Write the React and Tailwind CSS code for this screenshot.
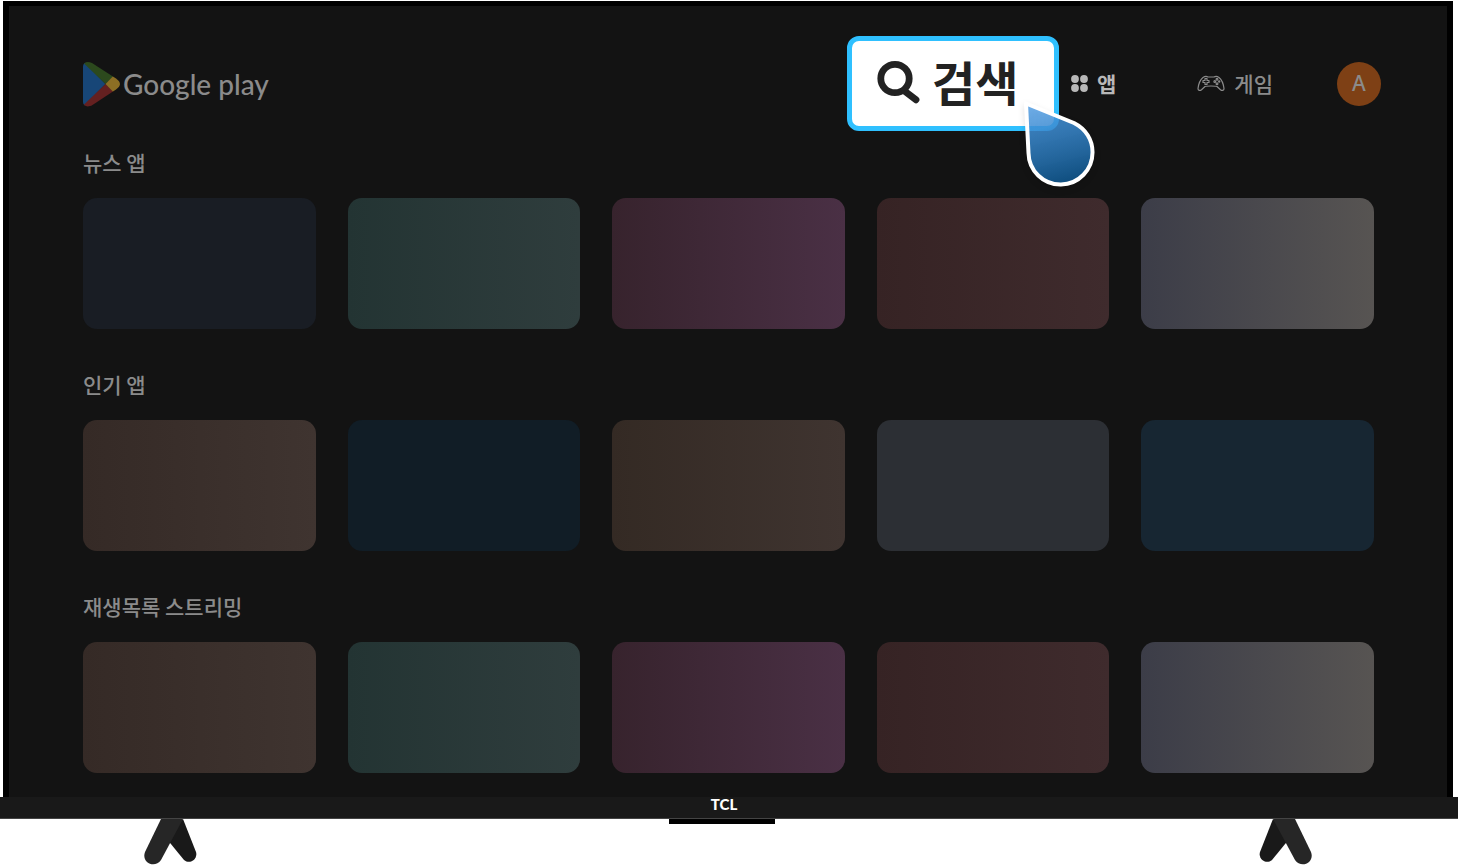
const tones = {
  navy: "bg-[#191d24]",
  teal: "bg-linear-to-r from-[#233433] to-[#2f3d3d]",
  plum: "bg-linear-to-r from-[#37232d] to-[#4a3045]",
  wine: "bg-linear-to-r from-[#362324] to-[#3f2b2d]",
  fog: "bg-linear-to-r from-[#3c3d48] to-[#575452]",
  umber: "bg-linear-to-r from-[#352a26] to-[#3f3430]",
  cocoa: "bg-linear-to-r from-[#342a24] to-[#3f3430]",
  ocean: "bg-[#111d26]",
  slate: "bg-[#2c2f34]",
  marine: "bg-[#172632]",
};

const sections = [
  { title: "뉴스 앱", tiles: ["navy", "teal", "plum", "wine", "fog"] },
  { title: "인기 앱", tiles: ["umber", "ocean", "cocoa", "slate", "marine"] },
  { title: "재생목록 스트리밍", tiles: ["umber", "teal", "plum", "wine", "fog"] },
];

const PlayLogo = () => (
  <svg viewBox="0 0 37 46" className="h-[46px] w-[37px]" aria-hidden="true">
    <defs>
      <clipPath id="play-shape">
        <path d="M0 5.500C0 1.500 4-.3 9 2L33 17.500c5.300 3.700 5.300 7.300 0 11L9.500 44C4.500 47 0 45 0 41Z" />
      </clipPath>
    </defs>
    <g clipPath="url(#play-shape)">
      <path d="M0 0v46l22.500-23Z" fill="#174677" />
      <path d="M0 0h37v9.500L22.500 23 0 1.500Z" fill="#2c491d" />
      <path d="M0 44.500 22.500 23 37 37v9H0Z" fill="#642020" />
      <path d="M22.500 23 30 15.300l7-1v18l-7-1.500Z" fill="#8c6f24" />
    </g>
  </svg>
);

const SearchIcon = () => (
  <svg viewBox="0 0 44 44" className="size-[44px]" fill="none" stroke="#222" aria-hidden="true">
    <circle cx="19" cy="18.500" r="14.200" strokeWidth="6.800" />
    <path d="m28.500 31 11.500 8.800" strokeWidth="6.800" strokeLinecap="round" />
  </svg>
);

const AppsIcon = () => (
  <svg viewBox="0 0 17 17" className="size-[17px]" fill="currentColor" aria-hidden="true">
    <circle cx="4" cy="4" r="3.900" />
    <circle cx="13" cy="4" r="3.900" />
    <circle cx="4" cy="13" r="3.900" />
    <circle cx="13" cy="13" r="3.900" />
  </svg>
);

const GamepadIcon = () => (
  <svg
    viewBox="0 0 28 18"
    className="h-[18px] w-[28px]"
    fill="none"
    stroke="currentColor"
    strokeWidth="1.200"
    strokeLinejoin="round"
    aria-hidden="true"
  >
    <path d="M6 2.500c1.500-1 3.500-1.300 5-.5h6c1.500-.8 3.500-.5 5 .5 2.500 2 4.500 7 5 11 .2 2-2 2.500-3.500 1.200L20 11.500c-1-.7-11-.7-12 0l-3.500 3.200C3 16 .8 15.500 1 13.500c.5-4 2.500-9 5-11Z" />
    <path d="M8 3.500h2v2h2v2h-2v2H8v-2H6v-2h2Z" />
    <circle cx="20" cy="4.300" r=".9" />
    <circle cx="20" cy="8.700" r=".9" />
    <circle cx="17.800" cy="6.500" r=".9" />
    <circle cx="22.200" cy="6.500" r=".6" />
  </svg>
);

const Pointer = () => (
  <svg
    viewBox="0 0 90 100"
    className="pointer-events-none absolute top-[59px] left-[168px] h-[100px] w-[90px] drop-shadow-md"
    aria-hidden="true"
  >
    <defs>
      <linearGradient id="pointer-fill" x1=".2" y1="0" x2=".4" y2="1">
        <stop offset="0" stopColor="#4597e4" stopOpacity=".75" />
        <stop offset=".3" stopColor="#3f8fd6" stopOpacity=".85" />
        <stop offset="1" stopColor="#104f80" />
      </linearGradient>
    </defs>
    <path
      d="M11 8.500 59 28c12 6 18.500 17 18.500 29a32 32 0 0 1-64 1Z"
      fill="url(#pointer-fill)"
      stroke="#fff"
      strokeWidth="4"
      strokeLinejoin="round"
    />
  </svg>
);

const Stand = ({ flipped }) => (
  <svg viewBox="0 0 53 46" className={flipped ? "h-[46px] w-[53px] -scale-x-100" : "h-[46px] w-[53px]"} aria-hidden="true">
    <path d="M39 0 52 33c2 7-6 13-12 8L22 19Z" fill="#191919" />
    <path d="M17 0h22L17 41c-6 9-20 3-16-8Z" fill="#262626" />
  </svg>
);

const Section = ({ title, tiles }) => (
  <section>
    <h2 className="mb-[22px] text-[21px] leading-7 font-medium">{title}</h2>
    <div className="grid grid-cols-5 gap-8">
      {tiles.map((tone, index) => (
        <div key={index} className={`h-[131px] rounded-[14px] ${tones[tone]}`} />
      ))}
    </div>
  </section>
);

const Header = () => (
  <header className="flex h-[95px] items-center pr-[66px] pl-[74px]">
    <a href="#home" className="flex items-center gap-[3px] font-[Lato,sans-serif] text-[28px] leading-8 font-medium">
      <PlayLogo />
      <span>Google play</span>
    </a>

    <nav className="ml-auto flex items-center">
      <div className="relative z-10 mr-3">
        <button className="flex h-[95px] w-[212px] items-center gap-3 rounded-xl border-[5px] border-[#2fc0ff] bg-white pb-1 pl-6 text-[47px] leading-none font-bold text-[#222]">
          <SearchIcon />
          <span className="pb-0.5">검색</span>
        </button>
        <Pointer />
      </div>

      <button className="mr-[81px] flex items-center gap-[9px] text-[21px] leading-7 font-bold text-[#b8b8b8]">
        <AppsIcon />
        <span className="pb-0.5">앱</span>
      </button>

      <button className="mr-16 flex items-center gap-[9px] text-[21px] leading-7 font-medium">
        <GamepadIcon />
        <span className="pb-0.5">게임</span>
      </button>

      <button className="size-[44px] rounded-full bg-[#7e4015] font-['Noto_Sans',sans-serif] text-[21px] font-medium">
        A
      </button>
    </nav>
  </header>
);

const App = () => (
  <div className="overflow-hidden bg-white pt-px font-['Noto_Sans_CJK_KR',sans-serif] text-[#8b8b8b]">
    {/* Screen */}
    <main className="mr-[6px] ml-[3px] border-x-6 border-t-5 border-black bg-[#131313] pt-[30px] pb-6">
      <Header />
      <div className="mt-[17px] flex flex-col gap-[41px] pr-[73px] pl-[74px]">
        {sections.map((section) => (
          <Section key={section.title} {...section} />
        ))}
      </div>
    </main>

    {/* Bottom bezel */}
    <div className="mr-px flex h-[22px] justify-center border-b border-[#444] bg-[#191919] pr-[10px] font-[Lato,sans-serif] text-[15px] leading-[14px] font-black text-white">
      TCL
    </div>

    {/* Feet */}
    <div className="grid grid-cols-[144fr_53px_472fr_106px_485fr_53px_147fr]">
      <div className="col-start-2">
        <Stand />
      </div>
      <div className="col-start-4 h-[5px] bg-black" />
      <div className="col-start-6">
        <Stand flipped />
      </div>
    </div>
  </div>
);

export default App;
